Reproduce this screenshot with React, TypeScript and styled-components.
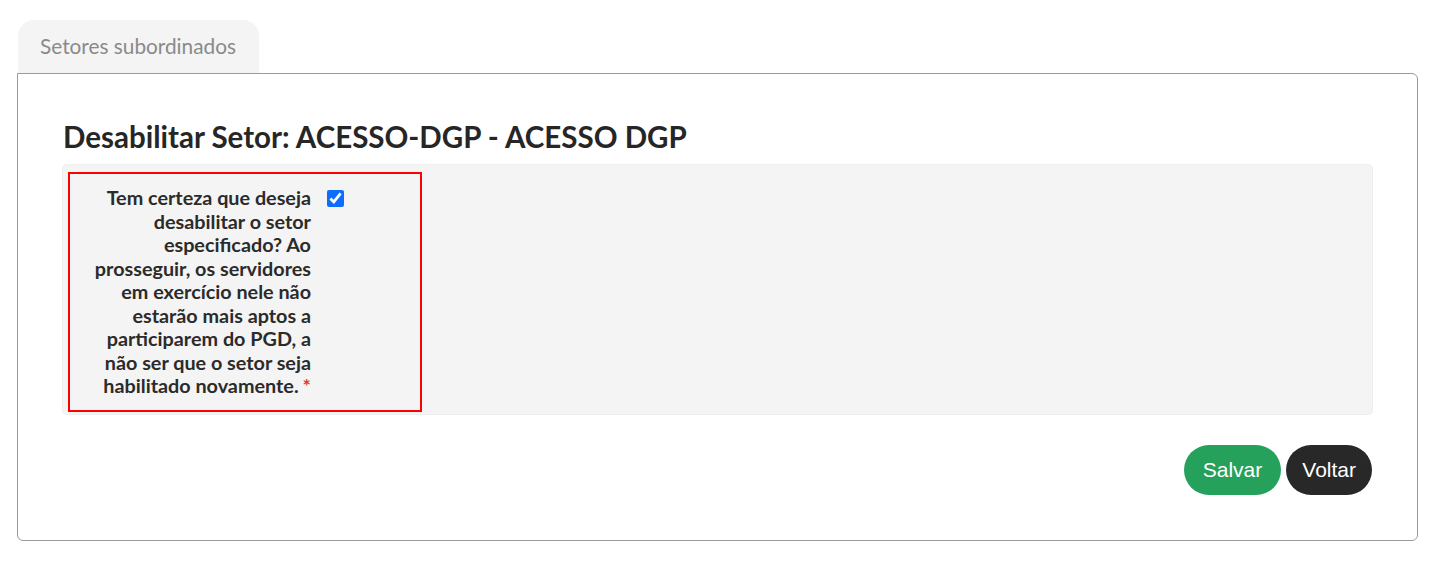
import React from "react";
import styled, { createGlobalStyle } from "styled-components";

const Global = createGlobalStyle`
  html, body { margin: 0; padding: 0; background: #fff; }
  body { font-family: Lato, "Open Sans", sans-serif; }
  * { box-sizing: border-box; }
`;

const Page = styled.div`
  padding: 20px 12px 0 17px;
  width: 1430px;
`;

const Tabs = styled.div`
  display: flex;
  padding-left: 1px;
`;

const Tab = styled.div`
  background: #f4f4f4;
  color: #8a8a8a;
  font-family: Lato, sans-serif;
  font-size: 20.8px;
  height: 53px;
  padding: 14px 22px 0 22px;
  border-radius: 16px 16px 0 0;
  width: 241px;
  line-height: 1.2;
`;

const Card = styled.div`
  border: 1px solid #9a9a9a;
  border-radius: 0 6px 6px 6px;
  padding: 45px 45px 45px 45px;
  width: 1401px;
`;

const Title = styled.h2`
  margin: 0 0 11px 0;
  font-family: Lato, sans-serif;
  font-weight: 700;
  font-size: 29.5px;
  line-height: 1.2;
  color: #262626;
`;

const FormBox = styled.div`
  background: #f4f4f4;
  border-radius: 4px;
  box-shadow: 0 0 0 1px #eeeeee;
  padding: 7px 5px 2px 5px;
`;

const Highlight = styled.div`
  border: 2px solid #ff0000;
  width: 354px;
  display: flex;
  padding: 12px 0 12px 0;
`;

const Label = styled.label`
  width: 241px;
  padding-left: 19px;
  text-align: right;
  font-family: Lato, sans-serif;
  font-weight: 700;
  font-size: 19.8px;
  line-height: 23.5px;
  color: #2b2b2b;
`;

const Required = styled.span`
  color: #e0392b;
  margin-left: 4px;
`;

const Check = styled.input`
  margin: 4px 0 0 16px;
  width: 17px;
  height: 17px;
  accent-color: #0d6efd;
`;

const Actions = styled.div`
  display: flex;
  justify-content: flex-end;
  gap: 5px;
  margin-top: 31px;
`;

const Button = styled.button<{ $variant: "success" | "dark" }>`
  height: 50px;
  border: none;
  border-radius: 25px;
  padding: 0 ${(p) => (p.$variant === "success" ? "19px" : "16px")};
  font-family: "Liberation Sans", Arial, sans-serif;
  font-size: 21px;
  color: #fff;
  background: ${(p) => (p.$variant === "success" ? "#25a15b" : "#282828")};
  cursor: pointer;
`;

export default function App() {
  return (
    <>
      <Global />
      <Page>
        <Tabs>
          <Tab>Setores subordinados</Tab>
        </Tabs>
        <Card>
          <Title>Desabilitar Setor: ACESSO-DGP - ACESSO DGP</Title>
          <FormBox>
            <Highlight>
              <Label htmlFor="confirm">
                Tem certeza que deseja desabilitar o setor especificado? Ao
                prosseguir, os servidores em exercício nele não estarão mais
                aptos a participarem do PGD, a não ser que o setor seja
                habilitado novamente.
                <Required>*</Required>
              </Label>
              <Check id="confirm" type="checkbox" defaultChecked />
            </Highlight>
          </FormBox>
          <Actions>
            <Button $variant="success">Salvar</Button>
            <Button $variant="dark">Voltar</Button>
          </Actions>
        </Card>
      </Page>
    </>
  );
}
